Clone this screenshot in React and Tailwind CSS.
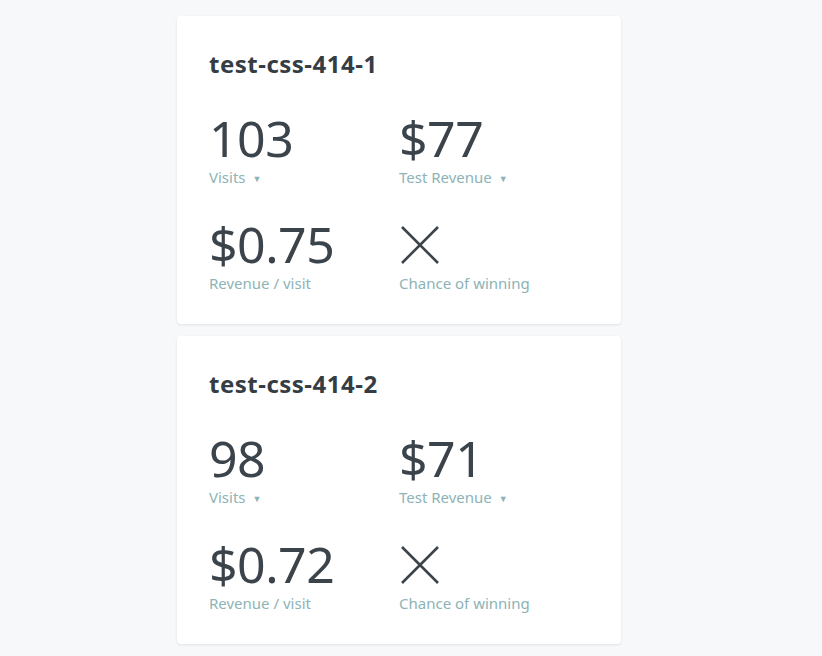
const tests = [
  { name: "test-css-414-1", visits: "103", revenue: "$77", perVisit: "$0.75" },
  { name: "test-css-414-2", visits: "98", revenue: "$71", perVisit: "$0.72" },
];

function Caret() {
  return <span className="ml-[7px] inline-block align-middle text-[9px] leading-none">▼</span>;
}

function Stat({ value, label, caret }) {
  return (
    <div>
      <div className="text-[50px] leading-[57px] tracking-[-0.5px] text-[#3b434b]">{value}</div>
      <div className="text-[15px] leading-5 text-[#8cb3b6]">
        {label}
        {caret && <Caret />}
      </div>
    </div>
  );
}

function Cross() {
  return (
    <div className="flex h-[57px] items-center">
      <svg width="40" height="40" viewBox="0 0 40 40" className="ml-[1px]">
        <path d="M2 2 L38 38 M38 2 L2 38" stroke="#3b434b" strokeWidth="2.6" fill="none" />
      </svg>
    </div>
  );
}

function TestCard({ test }) {
  return (
    <div className="rounded bg-white px-8 pt-8 pb-[31px] shadow-[0_1px_3px_rgba(0,0,0,0.09)]">
      <h2 className="text-[24px] font-bold leading-8 tracking-[0.5px] text-[#343c44]">{test.name}</h2>
      <div className="mt-[30px] grid grid-cols-[190px_1fr] gap-y-[29px]">
        <Stat value={test.visits} label="Visits" caret />
        <Stat value={test.revenue} label="Test Revenue" caret />
        <Stat value={test.perVisit} label="Revenue / visit" />
        <div>
          <Cross />
          <div className="text-[15px] leading-5 text-[#8cb3b6]">Chance of winning</div>
        </div>
      </div>
    </div>
  );
}

export default function App() {
  return (
    <div
      className="min-h-[656px] bg-[#f7f8fa] pt-4"
      style={{ fontFamily: '"Noto Sans", "Open Sans", sans-serif' }}
    >
      <div className="ml-[177px] flex w-[444px] flex-col gap-3">
        {tests.map((t) => (
          <TestCard key={t.name} test={t} />
        ))}
      </div>
    </div>
  );
}
